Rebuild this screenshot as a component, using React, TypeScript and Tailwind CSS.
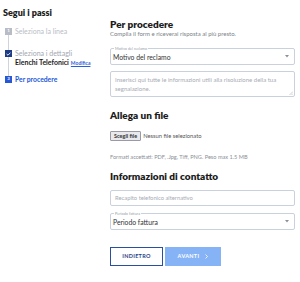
import React from "react";

function Caret() {
  return (
    <svg width="4" height="3" viewBox="0 0 4 3" className="shrink-0">
      <path d="M0 0 L4 0 L2 2.5 Z" fill="#8a8f98" />
    </svg>
  );
}

function SelectBox({ legend, value }: { legend: string; value: string }) {
  return (
    <div className="relative h-[17px] w-[185px] border border-[#c9d1dc] rounded-[2px] flex items-center justify-between pl-[2px] pr-[5px]">
      <span className="absolute -top-[3px] left-[3px] bg-white px-[1px] text-[3.8px] leading-[5px] text-[#9aa0a8]">
        {legend}
      </span>
      <span className="text-[6.8px] leading-[8px] text-[#333]">{value}</span>
      <Caret />
    </div>
  );
}

export default function App() {
  return (
    <div className="w-[300px] h-[282px] bg-white flex font-['Lato',sans-serif] overflow-hidden">
      {/* Sidebar */}
      <div className="w-[110px] shrink-0 pl-[3px] pt-[7px]">
        <div className="text-[9px] leading-[11px] font-extrabold text-[#1c1c1c]">Segui i passi</div>
        <div className="mt-[10px] pl-[2px] flex flex-col">
          {/* Step 1 */}
          <div className="flex gap-[3px] h-[22px]">
            <div className="w-[7px] flex flex-col items-center">
              <div className="w-[7px] h-[7px] bg-[#b7bcc6] flex items-center justify-center text-white text-[4.5px] font-bold leading-none">1</div>
              <div className="flex-1 w-px bg-[#cfd3da]" />
            </div>
            <div className="text-[7px] leading-[7px] text-[#b9bdc5]">Seleziona la linea</div>
          </div>
          {/* Step 2 */}
          <div className="flex gap-[3px] h-[26px]">
            <div className="w-[7px] flex flex-col items-center">
              <div className="w-[7px] h-[7px] bg-[#1e3b86] flex items-center justify-center">
                <svg width="5" height="4" viewBox="0 0 5 4">
                  <path d="M0.6 2 L2 3.2 L4.4 0.7" stroke="white" strokeWidth="0.9" fill="none" />
                </svg>
              </div>
              <div className="flex-1 w-px bg-[#cfd3da]" />
            </div>
            <div className="flex flex-col">
              <div className="text-[7px] leading-[7px] text-[#a3a8b0]">Seleziona i dettagli</div>
              <div className="flex items-baseline gap-[2px] leading-[11px]">
                <span className="text-[7px] font-bold text-[#1c1c1c]">Elenchi Telefonici</span>
                <span className="text-[5px] font-bold text-[#2c5ed8] underline">Modifica</span>
              </div>
            </div>
          </div>
          {/* Step 3 */}
          <div className="flex gap-[3px]">
            <div className="w-[7px] flex flex-col items-center">
              <div className="w-[7px] h-[7px] bg-[#2557d6] flex items-center justify-center text-white text-[4.5px] font-bold leading-none">3</div>
            </div>
            <div className="text-[6.8px] leading-[7px] font-bold text-[#2557d6]">Per procedere</div>
          </div>
        </div>
      </div>

      {/* Main */}
      <div className="w-[185px] shrink-0 pt-[18px] flex flex-col">
        <div className="text-[10px] leading-[12px] font-extrabold text-[#1c1c1c]">Per procedere</div>
        <div className="text-[6px] leading-[7px] text-[#7a7f87]">
          Compila il form e riceverai risposta al più presto.
        </div>

        <div className="mt-[11px]">
          <SelectBox legend="Motivo del reclamo" value="Motivo del reclamo" />
        </div>

        <div className="relative mt-[6px] h-[26px] w-[185px] border border-[#c9d1dc] rounded-[2px] pl-[4px] pr-[12px] pt-[3px] text-[6px] leading-[9px] text-[#a7acb4]">
          Inserisci qui tutte le informazioni utili alla risoluzione della tua segnalazione.
          <svg width="4" height="4" viewBox="0 0 4 4" className="absolute right-[1px] bottom-[1px]">
            <path d="M4 0.5 L0.5 4 M4 2.5 L2.5 4" stroke="#9aa0a8" strokeWidth="0.5" />
          </svg>
        </div>

        <div className="mt-[12px] text-[10px] leading-[12px] font-extrabold text-[#1c1c1c]">Allega un file</div>

        <div className="mt-[10px] flex items-center gap-[2px] h-[10px]">
          <div className="h-[10px] px-[3px] bg-[#e9e9ed] border border-[#9a9aa6] rounded-[1px] flex items-center text-[5.5px] font-bold text-[#333]">
            Scegli file
          </div>
          <span className="text-[5.8px] text-[#555]">Nessun file selezionato</span>
        </div>

        <div className="mt-[12px] text-[5.6px] leading-[7px] text-[#8a8f97]">
          Formati accettati: PDF, .Jpg, Tiff, PNG. Peso max 1.5 MB
        </div>

        <div className="mt-[10px] text-[10px] leading-[12px] font-extrabold text-[#1c1c1c]">Informazioni di contatto</div>

        <div className="mt-[8px] h-[16px] w-[185px] border border-[#c9d1dc] rounded-[2px] flex items-center px-[4px] text-[5.8px] text-[#a7acb4]">
          Recapito telefonico alternativo
        </div>

        <div className="mt-[7px]">
          <SelectBox legend="Periodo fattura" value="Periodo fattura" />
        </div>

        <div className="mt-[17px] flex gap-[2px]">
          <div className="w-[53px] h-[19px] border border-[#2a4f9e] flex items-center justify-center text-[5.5px] font-bold tracking-[0.3px] text-[#1f3f8a]">
            INDIETRO
          </div>
          <div className="w-[56px] h-[19px] bg-[#86b3f6] flex items-center justify-center gap-[6px] text-[5.5px] font-bold tracking-[0.3px] text-white">
            <span>AVANTI</span>
            <svg width="3" height="5" viewBox="0 0 3 5">
              <path d="M0.5 0.5 L2.5 2.5 L0.5 4.5" stroke="white" strokeWidth="0.8" fill="none" />
            </svg>
          </div>
        </div>
      </div>
    </div>
  );
}
